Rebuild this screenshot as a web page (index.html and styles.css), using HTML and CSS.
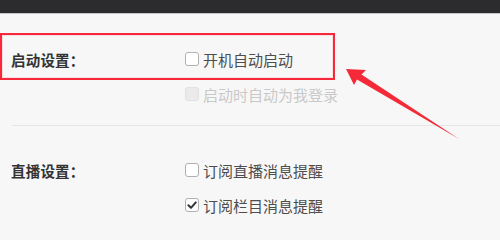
FILE: index.html
```html
<!DOCTYPE html>
<html lang="zh-CN">
<head>
<meta charset="utf-8">
<title>设置</title>
<link rel="stylesheet" href="styles.css">
</head>
<body>
<div class="topbar"></div>
<div class="content">
  <section class="group group-first">
    <div class="row">
      <div class="label">启动设置：</div>
      <label class="option"><span class="box"></span><span class="text">开机自动启动</span></label>
    </div>
    <div class="row">
      <div class="label"></div>
      <label class="option disabled"><span class="box"></span><span class="text">启动时自动为我登录</span></label>
    </div>
  </section>
  <div class="sep"></div>
  <section class="group group-second">
    <div class="row">
      <div class="label">直播设置：</div>
      <label class="option"><span class="box"></span><span class="text">订阅直播消息提醒</span></label>
    </div>
    <div class="row">
      <div class="label"></div>
      <label class="option"><span class="box checked"><svg viewBox="0 0 12 12" width="12" height="12"><path d="M2.4 6.2 L5 8.8 L9.8 3.4" fill="none" stroke="#333" stroke-width="2" stroke-linecap="round" stroke-linejoin="round"/></svg></span><span class="text">订阅栏目消息提醒</span></label>
    </div>
  </section>
  <div class="highlight"></div>
  <svg class="arrow" width="500" height="231" viewBox="0 0 500 231">
    <polygon points="346,69 366,70 361.5,74.5 459,139 357,79.5 354,85" fill="#f42a38"/>
  </svg>
</div>
</body>
</html>
```
FILE: styles.css
```css
html, body {
  margin: 0;
  padding: 0;
}
body {
  width: 500px;
  height: 231px;
  overflow: hidden;
  background: #f7f7f7;
  font-family: "Noto Sans CJK SC", "Noto Sans", sans-serif;
}
.topbar {
  height: 13px;
  background: #2c2c2e;
  border-bottom: 1px solid #c4c4c4;
}
.content {
  position: relative;
}
.group {
  display: flex;
  flex-direction: column;
  gap: 15px;
  padding-left: 11px;
}
.group-first {
  padding-top: 35px;
}
.group-second {
  padding-top: 34px;
}
.row {
  display: flex;
  align-items: center;
  height: 20px;
}
.label {
  width: 174px;
  flex: none;
  font-size: 14.5px;
  font-weight: bold;
  color: #333;
  letter-spacing: 0.2px;
}
.option {
  display: flex;
  align-items: center;
  gap: 4px;
  font-size: 15px;
  color: #4d4d4d;
}
.box {
  width: 12px;
  height: 12px;
  border: 1px solid #b0b0b0;
  border-radius: 3px;
  background: #fff;
  display: flex;
  align-items: center;
  justify-content: center;
  flex: none;
}
.box svg {
  display: block;
  flex: none;
}
.disabled {
  color: #c9c9c9;
}
.disabled .box {
  background: #ebebeb;
  border-color: #e0e0e0;
}
.sep {
  height: 1px;
  background: #e6e6e6;
  margin: 21px 0 0 12px;
}
.highlight {
  position: absolute;
  left: 0;
  top: 19px;
  width: 331px;
  height: 43px;
  border: 2.5px solid #f8283a;
  box-shadow: inset 0 0 0 1px rgba(248, 40, 58, 0.12);
}
.arrow {
  position: absolute;
  left: 0;
  top: -14px;
}
```
